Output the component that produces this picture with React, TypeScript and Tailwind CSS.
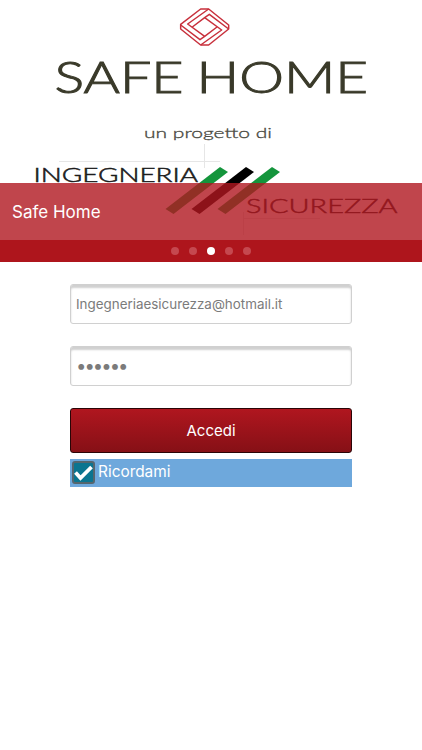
import React, { useState } from 'react';

const slides = [0, 1, 2, 3, 4];

const SafeHomeBanner = () => (
  <svg
    viewBox="0 0 422 240"
    className="block w-full h-[240px]"
    fontFamily="Lato, sans-serif"
  >
    {/* Logo */}
    <g
      transform="translate(160 0) scale(0.3333)"
      fill="none"
      stroke="#c8303c"
      strokeWidth="4.5"
      strokeLinejoin="round"
    >
      <path d="M62 73L122 27H146L206 75V87L146 135H122L62 87Z" />
      <path d="M146 27L83 72L134 109L171 81" />
      <path d="M122 135L185 90L134 53L97 81" />
      <path d="M206 87L148 43L134 53" />
      <path d="M62 75L120 119L134 109" />
    </g>

    <g fill="#3a3a2a" fontWeight="300" stroke="#3a3a2a" strokeWidth="1">
      <text x="54.500" y="93" fontSize="42.500" textLength="129" lengthAdjust="spacingAndGlyphs">
        SAFE
      </text>
      <text x="196.500" y="93" fontSize="42.500" textLength="171.500" lengthAdjust="spacingAndGlyphs">
        HOME
      </text>
    </g>
    <text x="144" y="137.500" fontSize="14" fontWeight="300" stroke="#4a4a42" strokeWidth="0.3" fill="#4a4a42" textLength="128" lengthAdjust="spacingAndGlyphs">
      un progetto di
    </text>

    <path d="M59 161.500H220M204.500 144V168M243.500 212V235M243 218.500H320" stroke="#e6e6e6" fill="none" />

    <g fill="#1c1c1c" fontWeight="300" stroke="#1c1c1c" strokeWidth="0.5">
      <text x="33.500" y="181.500" fontSize="19.500" textLength="164.500" lengthAdjust="spacingAndGlyphs">
        INGEGNERIA
      </text>
      <text x="246" y="213" fontSize="20.500" textLength="151.500" lengthAdjust="spacingAndGlyphs">
        SICUREZZA
      </text>
    </g>

    <path d="M220 167L228 172L173.500 214L165.500 209Z" fill="#14953c" />
    <path d="M246 167L254 172L199.500 214L191.500 209Z" fill="#000" />
    <path d="M272 167L280 172L225.500 214L217.500 209Z" fill="#14953c" />
  </svg>
);

const App = () => {
  const [email, setEmail] = useState('Ingegneriaesicurezza@hotmail.it');
  const [password, setPassword] = useState('secret');
  const [remember, setRemember] = useState(true);
  const [current, setCurrent] = useState(2);

  return (
    <div className="min-h-screen bg-white font-[Inter,sans-serif]">
      <header className="relative">
        <SafeHomeBanner />
        {/* Caption over the slide */}
        <div className="absolute inset-x-0 bottom-[22px] h-[57px] bg-[#b0161f]/80 px-3 pt-[2px] flex items-center">
          <h1 className="text-[17px] text-white">Safe Home</h1>
        </div>
        <div className="h-[22px] bg-[#ae151c] flex items-center justify-center gap-[10px]">
          {slides.map((slide) => (
            <button
              key={slide}
              type="button"
              aria-label={`Slide ${slide + 1}`}
              onClick={() => setCurrent(slide)}
              className={`w-2 h-2 rounded-full ${
                slide === current ? 'bg-white' : 'bg-[#c5484f]'
              }`}
            />
          ))}
        </div>
      </header>

      <form
        onSubmit={(e) => e.preventDefault()}
        className="w-[282px] ml-[70px] pt-[22px]"
      >
        <input
          type="text"
          value={email}
          onChange={(e) => setEmail(e.target.value)}
          className="block w-full h-10 px-[5px] border border-[#d0d0d0] rounded-[3px] shadow-[inset_0_3px_2px_#d0d0d0] text-[13.4px] text-[#7b7b7b] outline-none"
        />
        <input
          type="password"
          value={password}
          onChange={(e) => setPassword(e.target.value)}
          className="block w-full h-10 mt-[22px] px-[5px] pb-[3px] border border-[#d0d0d0] rounded-[3px] shadow-[inset_0_3px_2px_#d0d0d0] text-[18.5px] tracking-[-2px] text-[#7b7b7b] outline-none"
        />
        <button
          type="submit"
          className="block w-full h-[45px] mt-[22px] pt-[2px] border border-[#2a0507] rounded-[3px] bg-linear-to-b from-[#b0161f] to-[#861016] text-[15px] text-white"
        >
          Accedi
        </button>
        <label className="flex h-7 mt-[6px] pl-[2px] items-center bg-[#6ea8dc] text-white">
          <input
            type="checkbox"
            checked={remember}
            onChange={(e) => setRemember(e.target.checked)}
            className="sr-only"
          />
          <span className="w-[23px] h-[23px] -mt-px rounded-[3px] border-2 border-[#55666e] bg-[#0b7590]">
            {remember && (
              <svg viewBox="0 0 19 19" className="block w-full h-full">
                <path d="M1.500 9.500L6.500 15L17.500 4" fill="none" stroke="#fff" strokeWidth="3.800" />
              </svg>
            )}
          </span>
          <span className="ml-[3px] -mt-[3px] text-[15.4px]">Ricordami</span>
        </label>
      </form>
    </div>
  );
};

export default App;
